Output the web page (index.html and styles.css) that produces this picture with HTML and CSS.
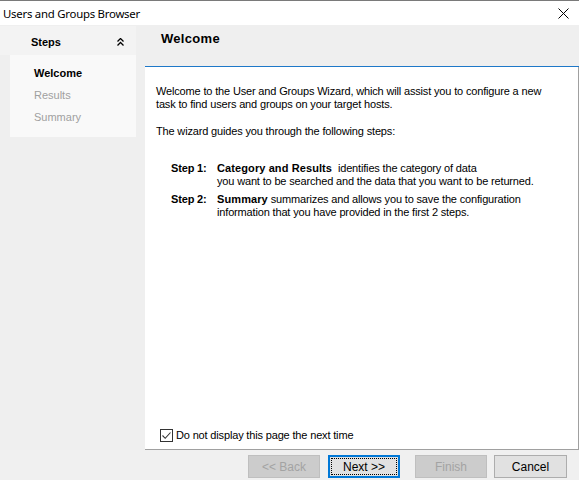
FILE: index.html
```html
<!DOCTYPE html>
<html>
<head>
<meta charset="utf-8">
<link rel="stylesheet" href="styles.css">
</head>
<body>
<div class="window">
  <div class="titlebar">
    <span class="title">Users and Groups Browser</span>
    <svg class="close" width="11" height="11" viewBox="0 0 11 11"><path d="M0.5 0.5 L10.5 10.5 M10.5 0.5 L0.5 10.5" stroke="#000" stroke-width="1" fill="none"/></svg>
  </div>
  <div class="main">
    <div class="sidebar">
      <div class="steps-head">
        <span class="steps-title">Steps</span>
        <svg class="chev" width="7" height="8" viewBox="0 0 7 8"><path d="M0.5 3.5 L3.5 0.5 L6.5 3.5 M0.5 7.5 L3.5 4.5 L6.5 7.5" stroke="#000" stroke-width="1.3" fill="none"/></svg>
      </div>
      <ul class="steps-list">
        <li class="step active">Welcome</li>
        <li class="step">Results</li>
        <li class="step">Summary</li>
      </ul>
    </div>
    <div class="panel">
      <div class="panel-head"><span class="panel-title">Welcome</span></div>
      <div class="panel-body">
        <p class="intro">Welcome to the User and Groups Wizard, which will assist you to configure a new<br>task to find users and groups on your target hosts.</p>
        <p class="guide">The wizard guides you through the following steps:</p>
        <div class="step-desc">
          <div class="sd-row"><b class="sd-label">Step 1:</b><span class="sd-text"><b>Category and Results</b>&nbsp; identifies the category of data<br>you want to be searched and the data that you want to be returned.</span></div>
          <div class="sd-row"><b class="sd-label">Step 2:</b><span class="sd-text"><b>Summary</b> summarizes and allows you to save the configuration<br>information that you have provided in the first 2 steps.</span></div>
        </div>
        <label class="check">
          <span class="box"><svg width="11" height="11" viewBox="0 0 11 11"><path d="M1.5 5.5 L4.2 8.3 L9.5 2.5" stroke="#333" stroke-width="1.1" fill="none"/></svg></span>
          <span>Do not display this page the next time</span>
        </label>
      </div>
    </div>
  </div>
  <div class="footer">
    <button class="btn disabled back">&lt;&lt; Back</button>
    <button class="btn primary next"><span class="focus">Next &gt;&gt;</span></button>
    <button class="btn disabled finish">Finish</button>
    <button class="btn cancel">Cancel</button>
  </div>
</div>
</body>
</html>
```
FILE: styles.css
```css
html, body {
  margin: 0;
  padding: 0;
}
body {
  width: 579px;
  height: 480px;
  overflow: hidden;
  background: #f0f0f0;
  font-family: "Liberation Sans", Arial, sans-serif;
  font-size: 11px;
  color: #000;
}
.window {
  display: flex;
  flex-direction: column;
  height: 480px;
}
.titlebar {
  height: 24px;
  background: #fff;
  border-top: 1px solid #7a7a7a;
  display: flex;
  align-items: center;
  justify-content: space-between;
  flex-shrink: 0;
}
.title {
  font-family: "Noto Sans", "Open Sans", sans-serif;
  font-size: 11.4px;
  padding-left: 3px;
  letter-spacing: -0.25px;
}
.close {
  margin-right: 10px;
  margin-top: 1px;
}
.main {
  display: flex;
  height: 425px;
}
.sidebar {
  width: 145px;
  flex-shrink: 0;
  background: #efefef;
}
.steps-head {
  width: 136px;
  height: 29px;
  margin-top: 1px;
  background: #f3f3f3;
  display: flex;
  align-items: center;
  box-sizing: border-box;
  padding: 3px 12px 0 31px;
  justify-content: space-between;
}
.steps-title {
  font-weight: bold;
  font-size: 11px;
}
.chev {
  margin-top: -1px;
}
.steps-list {
  list-style: none;
  margin: 0 0 0 10px;
  padding: 7px 0 9px 24px;
  width: 126px;
  box-sizing: border-box;
  background: #f9f9f9;
}
.step {
  height: 22px;
  line-height: 22px;
  color: #a0a0a0;
  font-size: 11px;
}
.step.active {
  color: #000;
  font-weight: bold;
}
.panel {
  flex: 1;
  display: flex;
  flex-direction: column;
}
.panel-head {
  height: 42px;
  background: #efefef;
  border-bottom: 1px solid #1e78c8;
  box-sizing: border-box;
  padding: 6px 0 0 16px;
  flex-shrink: 0;
}
.panel-title {
  font-weight: bold;
  font-size: 13px;
  letter-spacing: 0.3px;
}
.panel-body {
  flex: 1;
  background: #fff;
  border-right: 1px solid #a0a0a0;
  border-bottom: 1px solid #a0a0a0;
  display: flex;
  flex-direction: column;
  padding: 18px 0 7px 11px;
  line-height: 13px;
  letter-spacing: -0.16px;
}
.intro {
  margin: 0;
}
.guide {
  margin: 14px 0 0 0;
}
.step-desc {
  margin-top: 24px;
  padding-left: 15px;
  display: flex;
  flex-direction: column;
  gap: 5px;
}
.sd-row {
  display: flex;
}
.sd-label {
  width: 46px;
  flex-shrink: 0;
}
.sd-text b {
  letter-spacing: 0.1px;
}
.check {
  margin-top: auto;
  display: flex;
  align-items: center;
  padding-left: 4px;
}
.box {
  width: 11px;
  height: 11px;
  border: 1px solid #333;
  display: flex;
  margin-right: 3px;
  background: #fff;
}
.footer {
  display: flex;
  justify-content: flex-end;
  padding: 5px 12px 0 0;
}
.btn {
  width: 72px;
  height: 23px;
  box-sizing: border-box;
  font-family: "Liberation Sans", Arial, sans-serif;
  font-size: 12px;
  border: 1px solid #adadad;
  background: #e1e1e1;
  color: #000;
  padding: 0;
  margin: 0;
}
.btn.disabled {
  background: #cccccc;
  border-color: #bfbfbf;
  color: #a3a3a3;
}
.btn.primary {
  border: 2px solid #0078d7;
  padding: 1px;
}
.btn .focus {
  display: flex;
  align-items: center;
  justify-content: center;
  height: 100%;
  border: 1px dotted #000;
  box-sizing: border-box;
}
.next { margin-left: 8px; }
.finish { margin-left: 15px; }
.cancel { margin-left: 7px; width: 73px; }
```
